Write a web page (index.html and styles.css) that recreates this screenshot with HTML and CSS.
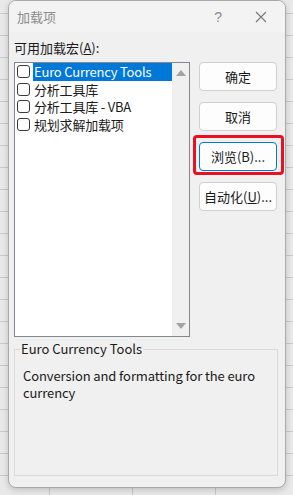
FILE: index.html
```html
<!DOCTYPE html>
<html lang="zh-CN">
<head>
    <meta charset="UTF-8">
    <meta name="viewport" content="width=device-width, initial-scale=1.0">
    <title>加载项</title>
    <link rel="stylesheet" href="styles.css">
</head>
<body>
    <div class="dialog">
        <div class="titlebar">
            <span class="title">加载项</span>
            <span class="help">?</span>
            <svg class="close" width="12" height="12" viewBox="0 0 12 12">
                <path d="M1 1 L11 11 M11 1 L1 11" stroke="#777" stroke-width="1.1" fill="none"/>
            </svg>
        </div>

        <div class="main">
            <div class="left">
                <div class="label">可用加载宏(<u>A</u>):</div>
                <div class="listbox">
                    <ul class="items">
                        <li class="item selected"><span class="check"></span><span class="name">Euro Currency Tools</span></li>
                        <li class="item"><span class="check"></span><span class="name">分析工具库</span></li>
                        <li class="item"><span class="check"></span><span class="name">分析工具库 - VBA</span></li>
                        <li class="item"><span class="check"></span><span class="name">规划求解加载项</span></li>
                    </ul>
                    <div class="scrollbar">
                        <span class="arrow up"></span>
                        <span class="arrow down"></span>
                    </div>
                </div>
            </div>
            <div class="buttons">
                <button class="btn">确定</button>
                <button class="btn">取消</button>
                <div class="marked">
                    <button class="btn focus">浏览(B)...</button>
                </div>
                <button class="btn">自动化(<u>U</u>)...</button>
            </div>
        </div>

        <fieldset class="desc">
            <legend>Euro Currency Tools</legend>
            <p>Conversion and formatting for the euro currency</p>
        </fieldset>
    </div>
</body>
</html>
```

FILE: styles.css
```css
body {
    margin: 0;
    width: 293px;
    height: 495px;
    overflow: hidden;
    font-family: "Noto Sans CJK SC", "Noto Sans", sans-serif;
    font-size: 13px;
    color: #1a1a1a;
    background-color: #e9e9e9;
    background-image:
        linear-gradient(to bottom, transparent 21px, #c9c9c9 21px),
        linear-gradient(to right, transparent 82px, #c9c9c9 82px);
    background-size: 100% 22px, 83px 100%;
    background-position: 0 -8px, -33px 0;
}
.dialog {
    margin-left: 8px;
    width: 276px;
    height: 486px;
    border: 1px solid #a9a9a9;
    border-radius: 8px;
    background: #f0f0f0;
    box-shadow: 0 2px 6px rgba(0,0,0,0.18);
    overflow: hidden;
}
.titlebar {
    height: 31px;
    display: flex;
    align-items: center;
    background: #f3f3f3;
}
.title {
    margin-left: 8px;
    color: #8c8c8c;
    flex: 1;
}
.help {
    color: #8c8c8c;
    font-family: "Liberation Sans", sans-serif;
    font-size: 14px;
    margin-right: 33px;
}
.close {
    margin-right: 18px;
}
.main {
    display: flex;
    padding: 7px 0 0 5px;
}
.label {
    height: 18px;
    line-height: 18px;
}
.label u {
    text-decoration-thickness: 1px;
}
.listbox {
    margin-top: 5px;
    width: 174px;
    height: 273px;
    border: 1px solid #828790;
    background: #fff;
    display: flex;
}
.items {
    list-style: none;
    margin: 0;
    padding: 0;
    flex: 1;
}
.item {
    height: 17.5px;
    display: flex;
    align-items: center;
}
.check {
    width: 11px;
    height: 11px;
    border: 1px solid #3a3a3a;
    border-radius: 3px;
    background: #fff;
    margin-left: 2px;
    margin-right: 3px;
    flex-shrink: 0;
}
.name {
    line-height: 17.5px;
    padding-left: 1px;
    flex: 1;
    letter-spacing: -0.2px;
}
.selected .name {
    background: #0078d7;
    color: #fff;
}
.scrollbar {
    width: 17px;
    background: #f0f0f0;
    display: flex;
    flex-direction: column;
    justify-content: space-between;
    align-items: center;
    padding: 7px 0;
    box-sizing: border-box;
}
.arrow {
    width: 0;
    height: 0;
    border-left: 5px solid transparent;
    border-right: 5px solid transparent;
}
.arrow.up {
    border-bottom: 6px solid #a3a3a3;
}
.arrow.down {
    border-top: 6px solid #a3a3a3;
}
.buttons {
    display: flex;
    flex-direction: column;
    gap: 11px;
    margin-left: 9px;
    padding-top: 23px;
}
.btn {
    width: 78px;
    height: 29px;
    font-family: "Noto Sans CJK SC", "Noto Sans", sans-serif;
    font-size: 13px;
    color: #1a1a1a;
    background: #fdfdfd;
    border: 1px solid #d0d0d0;
    border-radius: 4px;
    padding: 0;
}
.btn.focus {
    border-color: #0078d7;
}
.marked {
    position: relative;
    height: 29px;
}
.marked::after {
    content: "";
    position: absolute;
    left: -6px;
    right: -7px;
    top: -7px;
    bottom: -4px;
    border: 3px solid #e81123;
    border-radius: 4px;
}
.desc {
    margin: 4px 7px 0 5px;
    height: 135px;
    box-sizing: border-box;
    border: 1px solid #dadada;
    padding: 0 8px;
}
.desc legend {
    padding: 0 1px;
    margin-left: -3px;
    line-height: 16px;
}
.desc p {
    margin: 10px 0 0 0;
    line-height: 17px;
    letter-spacing: -0.1px;
}
```
